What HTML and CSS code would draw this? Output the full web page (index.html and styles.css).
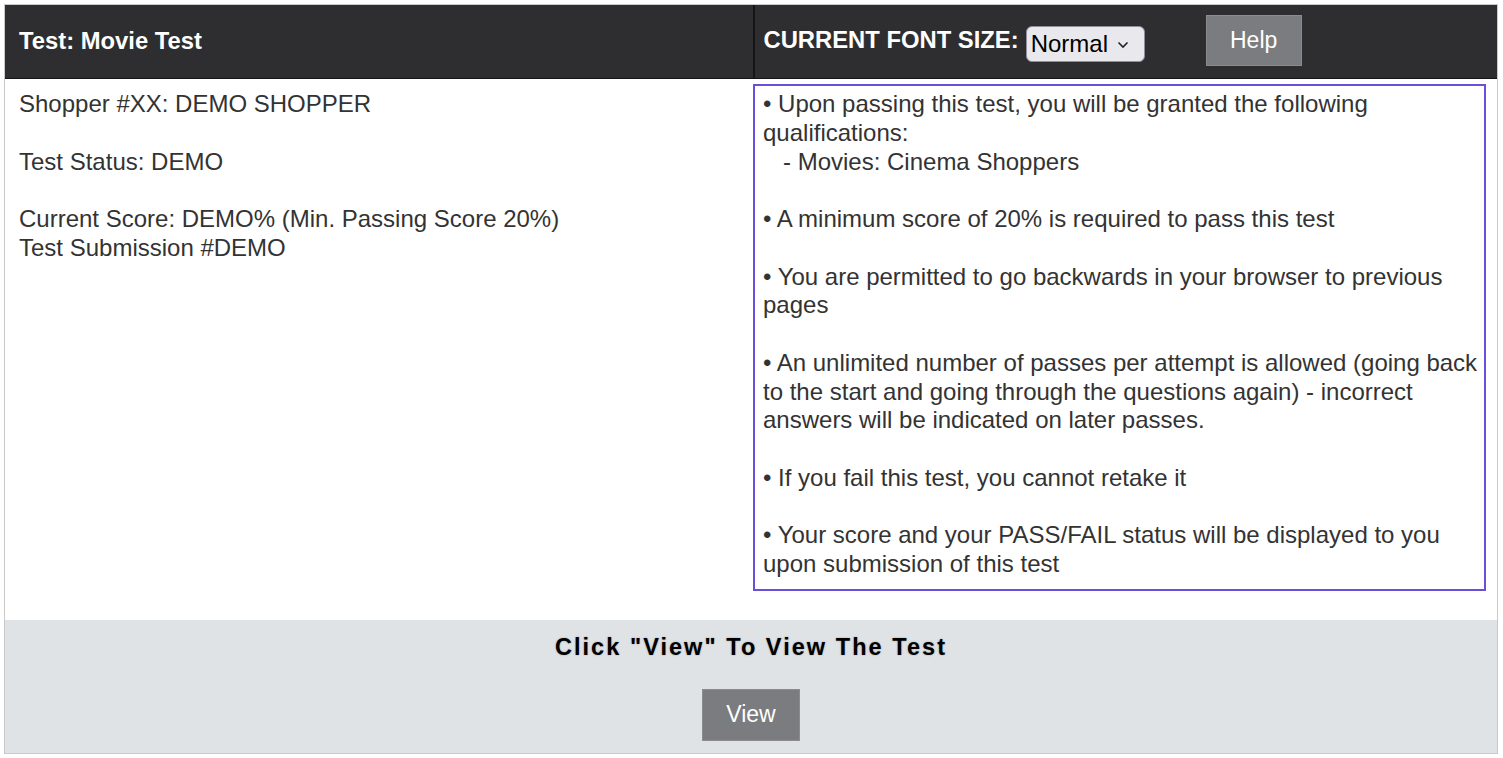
FILE: index.html
```html
<!DOCTYPE html>
<html>
<head>
<meta charset="utf-8">
<link rel="stylesheet" href="styles.css">
</head>
<body>
<div class="frame">
  <div class="header">
    <div class="hcell hleft">Test: Movie Test</div>
    <div class="hcell hright">
      <span class="fslabel">CURRENT FONT SIZE:</span>
      <span class="select">Normal <svg class="chev" width="12" height="8" viewBox="0 0 12 8"><path d="M1.5 1.5 L6 6 L10.5 1.5" fill="none" stroke="#222" stroke-width="1.6"/></svg></span>
      <span class="btn help">Help</span>
    </div>
  </div>
  <div class="body">
    <div class="bleft">
      Shopper #XX: DEMO SHOPPER<br><br>
      Test Status: DEMO<br><br>
      Current Score: DEMO% (Min. Passing Score 20%)<br>
      Test Submission #DEMO
    </div>
    <div class="bright">
      <div class="rules">
        • Upon passing this test, you will be granted the following qualifications:<br>
        &nbsp;&nbsp;&nbsp;- Movies: Cinema Shoppers<br><br>
        • A minimum score of 20% is required to pass this test<br><br>
        • You are permitted to go backwards in your browser to previous pages<br><br>
        • An unlimited number of passes per attempt is allowed (going back to the start and going through the questions again) - incorrect answers will be indicated on later passes.<br><br>
        • If you fail this test, you cannot retake it<br><br>
        • Your score and your PASS/FAIL status will be displayed to you upon submission of this test
      </div>
    </div>
  </div>
  <div class="footer">
    <div class="ftitle">Click "View" To View The Test</div>
    <span class="btn view">View</span>
  </div>
</div>
</body>
</html>
```
FILE: styles.css
```css
html, body { margin: 0; padding: 0; background: #fff; }
body {
  font-family: "Liberation Sans", Arial, sans-serif;
  color: #333;
  padding: 4px;
}
.frame {
  width: 1494px;
  border: 1px solid #c9c9c9;
  box-sizing: border-box;
}
.header {
  display: flex;
  background: #2e2e30;
  height: 73px;
  border-bottom: 1px solid #151515;
}
.hcell {
  flex: 1 1 0;
  display: flex;
  align-items: center;
  color: #fff;
  font-weight: bold;
  font-size: 23.8px;
}
.hleft { padding-left: 14px; border-right: 2px solid #151515; padding-bottom: 2px; }
.hright { padding-left: 9px; padding-bottom: 4px; }
.fslabel { margin-right: 7px; }
.select {
  display: inline-flex;
  align-items: center;
  gap: 9px;
  box-sizing: border-box;
  width: 119px;
  height: 36px;
  margin-top: 8px;
  padding-left: 4px;
  background: #e9e9ed;
  border: 1px solid #8f8f9d;
  border-radius: 6px;
  color: #000;
  font-weight: normal;
  font-size: 24px;
}
.chev { margin-top: 3px; }
.btn {
  display: inline-flex;
  align-items: center;
  justify-content: center;
  background: #7a7c80;
  color: #fff;
  font-weight: normal;
  font-size: 23px;
  border: 1px solid #8a8c90;
  box-sizing: border-box;
}
.help { width: 96px; height: 51px; margin-left: 61px; margin-top: 2px; }
.body {
  display: flex;
  font-size: 24px;
  line-height: 28.75px;
}
.bleft {
  flex: 1 1 0;
  padding: 11px 0 0 14px;
}
.bright {
  flex: 1 1 0;
  padding: 5px 11px 29px 1px;
}
.rules {
  border: 2px solid #6a4fdc;
  padding: 4px 4px 10px 8px;
}
.footer {
  background: #e0e3e6;
  height: 133px;
  display: flex;
  flex-direction: column;
  align-items: center;
}
.ftitle {
  color: #000;
  font-weight: bold;
  font-size: 23.5px;
  letter-spacing: 2.05px;
  margin-top: 14px;
  text-shadow: 0 0 2px rgba(0,0,0,0.3);
}
.view { width: 98px; height: 52px; margin-top: 28px; }
```
